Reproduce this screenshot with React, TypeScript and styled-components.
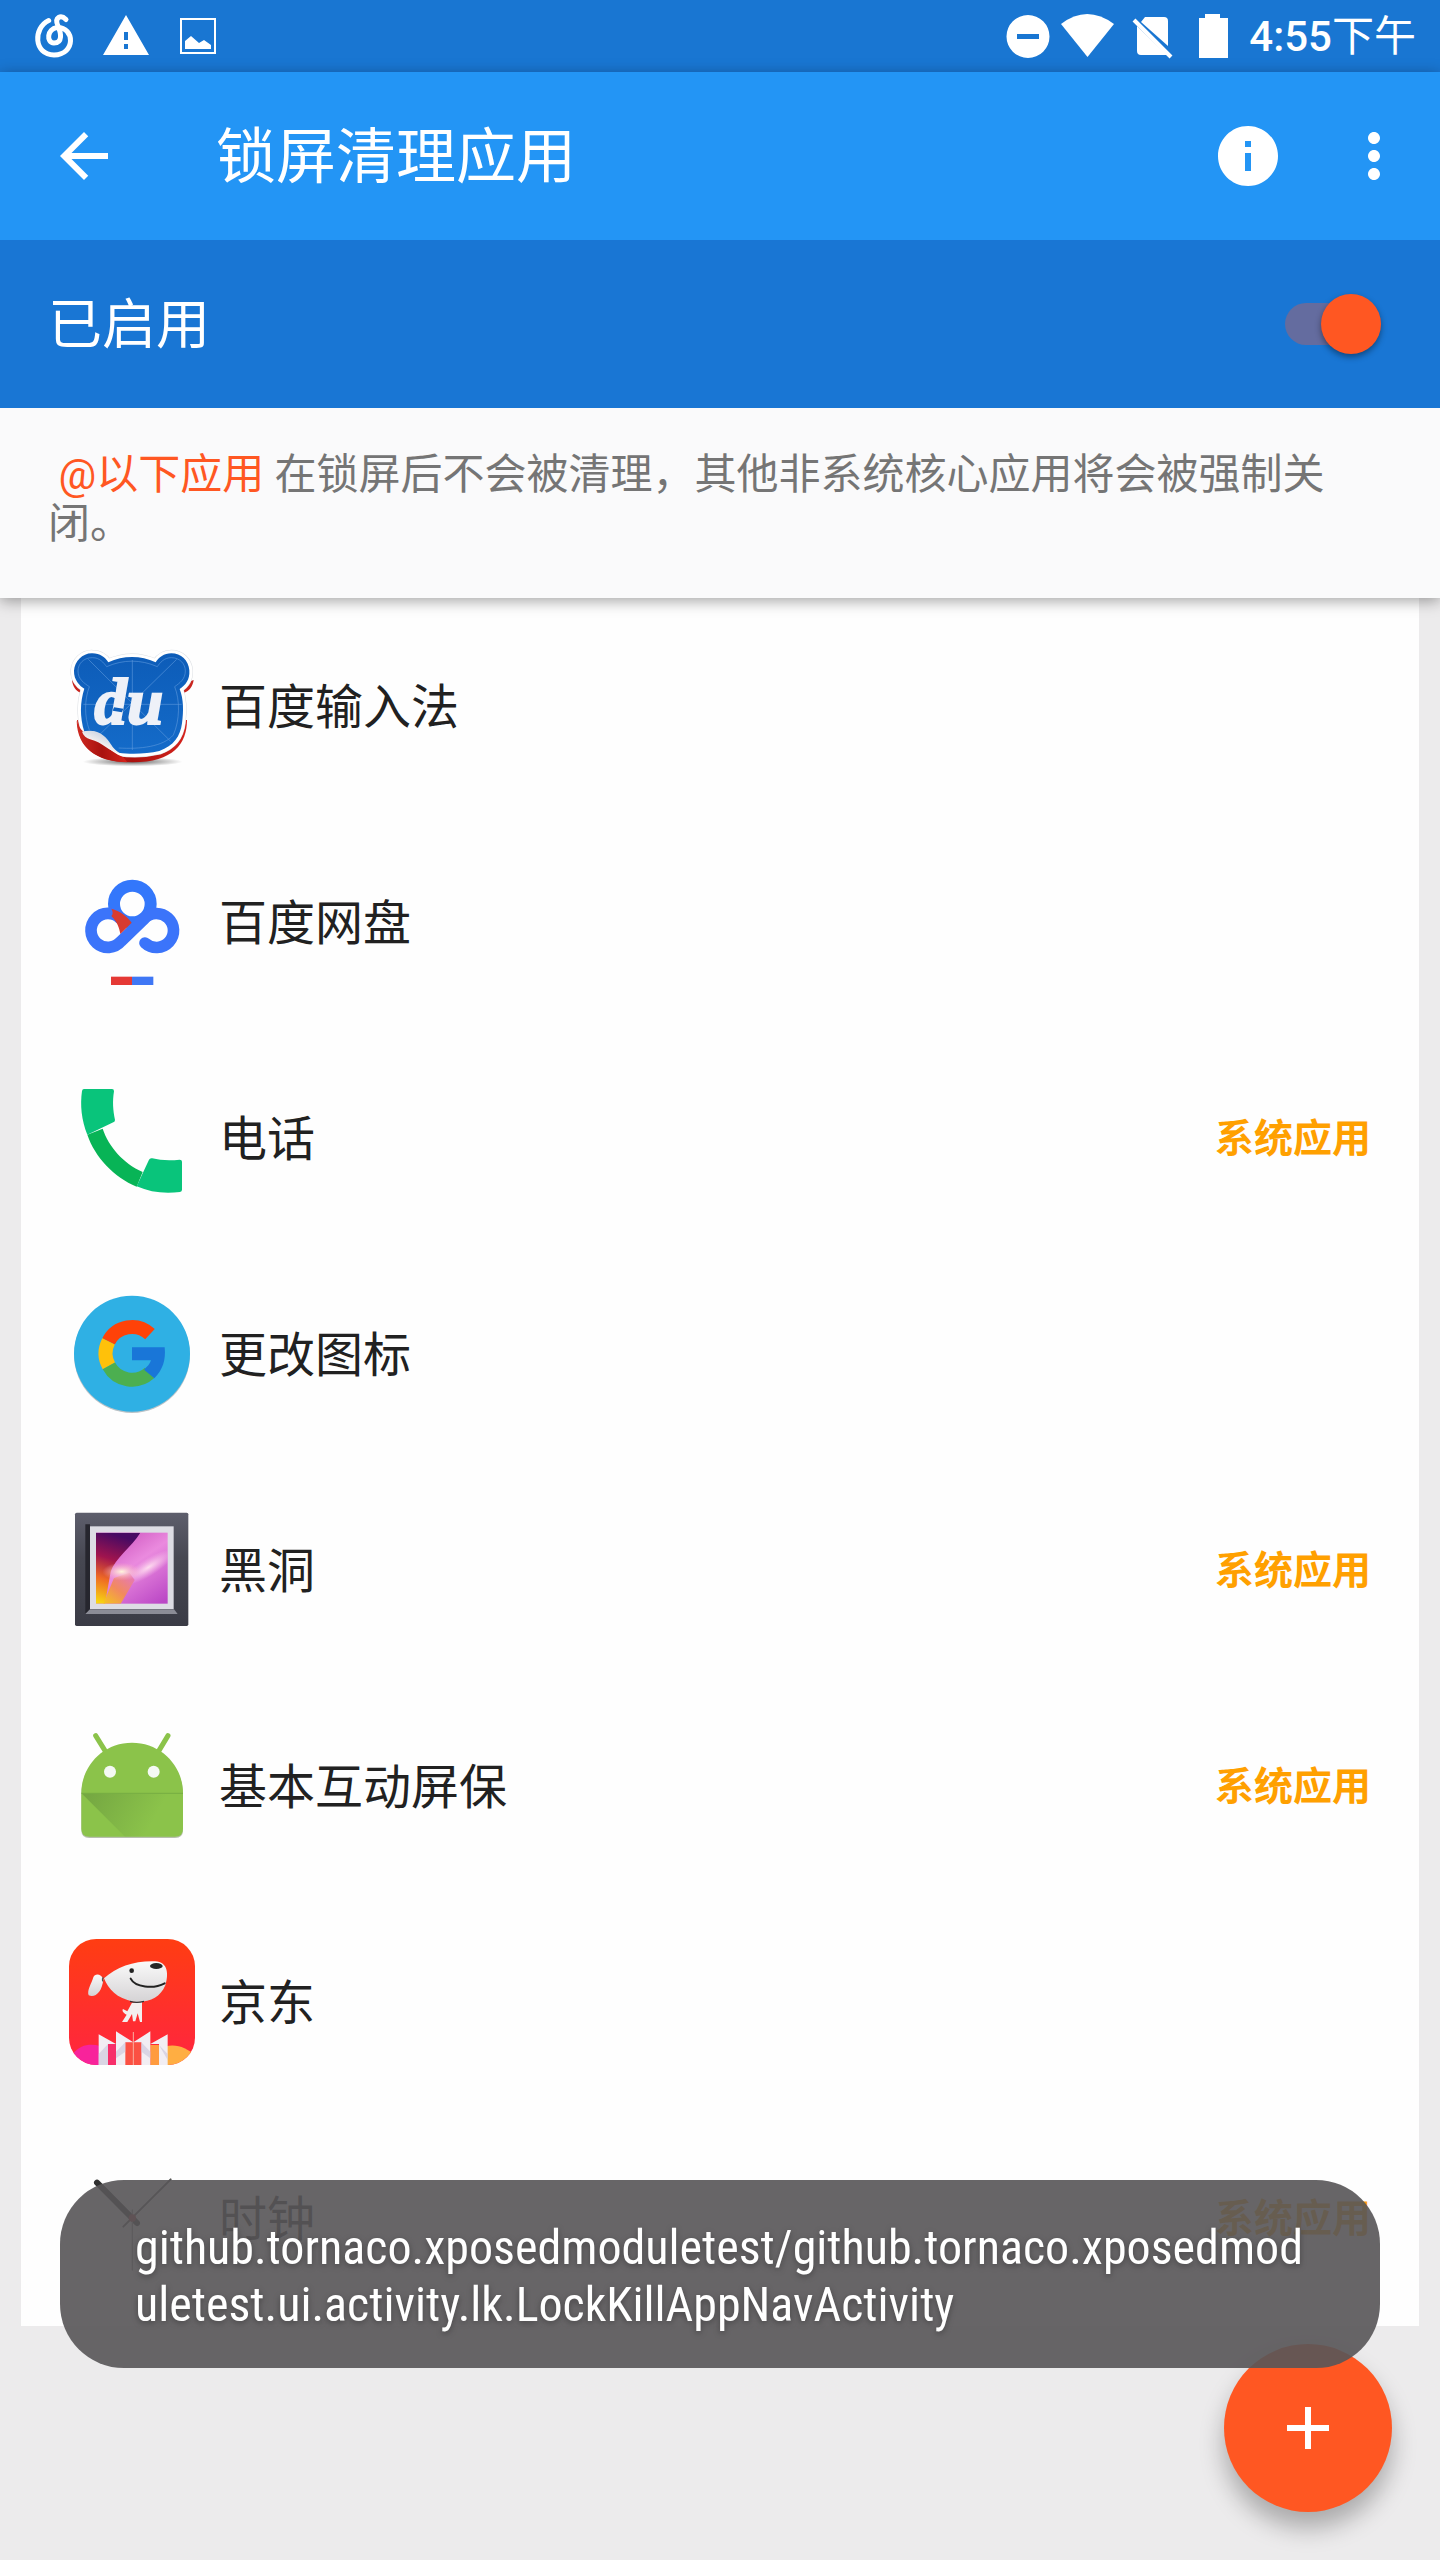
import React, { useState } from "react";
import styled, { createGlobalStyle } from "styled-components";

const GlobalStyle = createGlobalStyle`
  * { box-sizing: border-box; }
  body {
    margin: 0;
    background: #ecebec;
    color: #212121;
    font-family: Roboto, "Noto Sans CJK SC", sans-serif;
  }
  button { border: 0; padding: 0; background: none; color: inherit; cursor: pointer; font: inherit; }
  svg { display: block; }
`;

const Screen = styled.div`
  display: flex;
  flex-direction: column;
  min-height: 100vh;
`;

const StatusBar = styled.div`
  display: flex;
  align-items: center;
  justify-content: space-between;
  height: 72px;
  padding: 0 24px 0 18px;
  background: #1976d2;
  color: #fff;
`;

const StatusGroup = styled.div`
  display: flex;
  align-items: center;
`;

const Clock = styled.time`
  margin-left: 4px;
  padding-top: 2px;
  font-size: 42px;
  line-height: 48px;
  font-weight: 500;
`;

const Period = styled.span`
  font-weight: 400;
`;

const Header = styled.header`
  position: relative;
  z-index: 1;
  box-shadow: 0 3px 14px rgba(0, 0, 0, 0.36);
`;

const AppBar = styled.div`
  display: flex;
  align-items: center;
  height: 168px;
  padding: 0 30px 0 48px;
  background: #2395f5;
  color: #fff;
`;

const IconButton = styled.button`
  width: 72px;
  height: 72px;
`;

const Title = styled.h1`
  flex: 1;
  margin: 0 0 0 96px;
  padding-top: 4px;
  font-size: 60px;
  line-height: 72px;
  font-weight: 400;
`;

const Actions = styled.div`
  display: flex;
  gap: 54px;
`;

const SwitchBar = styled.label`
  display: flex;
  align-items: center;
  justify-content: space-between;
  height: 168px;
  padding: 0 59px 0 48px;
  background: #1976d4;
  color: #fff;
`;

const SwitchLabel = styled.span`
  padding-top: 4px;
  font-size: 54px;
  line-height: 64px;
`;

const Switch = styled.input`
  appearance: none;
  display: flex;
  align-items: center;
  width: 96px;
  height: 42px;
  margin: 0;
  border-radius: 21px;
  background: #646c9f;
  cursor: pointer;

  &::before {
    content: "";
    width: 60px;
    height: 60px;
    flex: none;
    border-radius: 50%;
    background: #eee;
    box-shadow: 0 3px 6px rgba(0, 0, 0, 0.4);
  }
  &:checked { justify-content: flex-end; }
  &:checked::before { background: #ff5722; }
`;

const Notice = styled.p`
  margin: 0;
  padding: 42px 48px 50px;
  background: #fafafb;
  color: #757575;
  font-size: 42px;
  line-height: 49px;
  white-space: pre-wrap;
`;

const Highlight = styled.span`
  color: #ff5722;
`;

const List = styled.ul`
  margin: 0 21px;
  padding: 0;
  list-style: none;
  background: #fefefe;
`;

const Row = styled.li`
  display: flex;
  align-items: center;
  gap: 24px;
  height: 216px;
  padding: 0 48px;
`;

const AppName = styled.span`
  flex: 1;
  padding-top: 4px;
  font-size: 48px;
  line-height: 56px;
`;

const Tag = styled.span`
  padding-top: 2px;
  color: #ffa000;
  font-size: 39px;
  line-height: 48px;
  font-weight: 700;
`;

const Fab = styled.button`
  position: fixed;
  right: 48px;
  bottom: 48px;
  display: grid;
  place-items: center;
  width: 168px;
  height: 168px;
  border-radius: 50%;
  background: #ff5722;
  color: #fff;
  box-shadow: 0 16px 24px rgba(0, 0, 0, 0.28);
`;

const Toast = styled.div`
  position: fixed;
  z-index: 2;
  left: 60px;
  right: 60px;
  bottom: 192px;
  padding: 39px 75px 35px;
  border-radius: 64px;
  background: rgba(88, 86, 88, 0.91);
  color: #fff;
  font-family: "Roboto Condensed", Roboto, sans-serif;
  font-size: 48px;
  line-height: 57px;
  word-break: break-all;
  text-shadow: 0 2px 6px rgba(0, 0, 0, 0.35);
`;

const LeftGlyph = ({ children }: { children: React.ReactNode }) => (
  <svg width="72" height="72" viewBox="0 0 72 72" fill="#fff" aria-hidden="true">{children}</svg>
);

const RightGlyph = ({ children }: { children: React.ReactNode }) => (
  <svg width="62" height="72" viewBox="0 0 62 72" fill="#fff" aria-hidden="true">{children}</svg>
);

const ActionGlyph = ({ d }: { d: string }) => (
  <svg width="72" height="72" viewBox="0 0 24 24" fill="currentColor" aria-hidden="true">
    <path d={d} />
  </svg>
);

const AppIcon = ({ top, children }: { top: number; children: React.ReactNode }) => (
  <svg width="126" height="126" viewBox={`87 ${top} 378 378`} overflow="visible" aria-hidden="true">
    {children}
  </svg>
);

const bear =
  "M157 100C128 99 104 124 102 152C101 180 120 198 133 206C120 246 119 290 133 335C165 328 183 342 202 364C212 377 221 391 236 398C270 403 320 402 358 393C401 378 421 349 426 310C431 274 431 238 419 207C436 196 450 180 448 151C446 122 423 100 394 100C372 100 356 113 347 127C302 106 250 106 205 127C196 112 180 100 157 100Z";

const InputMethodIcon = () => (
  <AppIcon top={69}>
    <defs>
      <linearGradient id="imeBlue" x1="0" y1="0" x2="0" y2="1">
        <stop offset="0" stopColor="#0d5cb8" />
        <stop offset="1" stopColor="#146bc9" />
      </linearGradient>
      <linearGradient id="imeRed" x1="0" y1="0" x2="1" y2="0">
        <stop offset="0" stopColor="#cf2a22" />
        <stop offset="0.5" stopColor="#a9120f" />
        <stop offset="1" stopColor="#d6231c" />
      </linearGradient>
      <linearGradient id="imeCurl" x1="0.2" y1="0.8" x2="0.6" y2="0.3">
        <stop offset="0" stopColor="#c9a9a8" />
        <stop offset="0.5" stopColor="#f4f0f0" />
        <stop offset="1" stopColor="#d5dbe6" />
      </linearGradient>
      <radialGradient id="imeShadow">
        <stop offset="0" stopColor="#000" stopOpacity="0.6" />
        <stop offset="1" stopColor="#000" stopOpacity="0" />
      </radialGradient>
    </defs>
    <ellipse cx="278" cy="425" rx="150" ry="14" fill="url(#imeShadow)" />
    <path d="M96 180C98 200 108 214 122 218L122 190ZM461 180C458 200 448 214 432 218L432 190Z" fill="#c9251f" />
    <path d="M111 300C114 370 150 427 278 427C400 427 441 370 441 300Z" fill="url(#imeRed)" />
    <path d={bear} fill="#fff" stroke="#dcdfe3" strokeWidth="22" strokeLinejoin="round" />
    <path d={bear} fill="#fff" stroke="#fff" strokeWidth="19" strokeLinejoin="round" />
    <path d={bear} fill="url(#imeBlue)" />
    <g fill="none" stroke="#5e9ade" strokeOpacity="0.6" strokeWidth="3">
      <path d="M277 120V390M130 253H425M145 118L392 364M410 118L150 372" />
      <path d="M157 113C130 113 114 132 114 153C114 178 133 190 148 200C133 240 133 290 148 330M394 113C420 113 436 132 436 153C436 178 418 190 404 200C420 240 420 300 400 345C370 380 300 388 236 384M157 113C180 113 190 128 200 140C250 118 302 118 352 140C360 128 372 113 394 113" />
    </g>
    <path d="M110 302C116 320 124 332 140 342C180 355 200 390 250 412L262 427C170 424 112 385 110 302Z" fill="url(#imeRed)" />
    <path d="M126 335C165 326 190 340 208 366C216 378 224 392 244 402C205 395 190 368 150 358C140 355 130 347 126 335Z" fill="url(#imeCurl)" />
    <text x="163" y="311" fill="#eef1f8" stroke="#eef1f8" strokeWidth="6" fontFamily="Liberation Serif, serif" fontWeight="700" fontStyle="italic" fontSize="196">du</text>
    <path d="M222 262L250 266L246 277L218 272Z" fill="#0f60bd" />
  </AppIcon>
);

const NetdiskIcon = () => (
  <AppIcon top={717}>
    <circle cx="277" cy="852" r="55" fill="none" stroke="#3377fb" strokeWidth="36" />
    <path
      d="M240 895A51 51 0 1 0 243 964L312 897A51 51 0 1 1 315 969"
      fill="none" stroke="#3b74fa" strokeWidth="35" strokeLinecap="round" strokeLinejoin="round"
    />
    <path d="M214 866C240 872 262 890 275 908L241 942C238 925 232 905 214 888Q222 880 214 866Z" fill="#d83b30" />
    <path d="M213 1070H276V1095H213Z" fill="#e53935" />
    <path d="M276 1070H340V1095H276Z" fill="#3f77f5" />
  </AppIcon>
);

const PhoneIcon = () => (
  <AppIcon top={45}>
    <path d="M142 224L188 206C206 260 250 310 308 336L290 380C222 352 164 290 142 224Z" fill="#08b456" />
    <path d="M132 87H216Q222 87 222 94C217 125 219 150 225 180Q225 185 220 187L142 224C124 180 120 135 126 93Q127 87 132 87Z" fill="#09c47b" />
    <path d="M290 379L327 299Q330 293 337 295C360 301 390 302 419 299Q426 299 426 305V389Q426 395 420 396C375 402 330 397 290 379Z" fill="#09c47b" />
  </AppIcon>
);

const IconChangerIcon = () => (
  <AppIcon top={693}>
    <circle cx="276" cy="885" r="174" fill="#8a9aa2" opacity="0.6" />
    <circle cx="276" cy="881" r="174" fill="#2fb0e4" />
    <g fill="none" strokeWidth="42">
      <path d="M205.600 844.100A79 79 0 0 1 329.900 822.200" stroke="#ff4208" />
      <path d="M206.600 917.700A79 79 0 0 1 205.600 844.100" stroke="#ffc10a" />
      <path d="M328.900 938.700A79 79 0 0 1 206.600 917.700" stroke="#4caf50" />
    </g>
    <path d="M276 862H374C378 900 368 930 343 955L312 929C322 920 330 912 333 901H276Z" fill="#1976d8" />
  </AppIcon>
);

const GalleryIcon = () => (
  <AppIcon top={81}>
    <defs>
      <linearGradient id="frame" x1="0" y1="0" x2="0" y2="1">
        <stop offset="0" stopColor="#5d5e6c" />
        <stop offset="0.4" stopColor="#474852" />
        <stop offset="1" stopColor="#3a3b45" />
      </linearGradient>
      <linearGradient id="photo" x1="0.2" y1="0" x2="0.9" y2="1">
        <stop offset="0" stopColor="#c94dbb" />
        <stop offset="0.45" stopColor="#ea8ade" />
        <stop offset="1" stopColor="#bb48c6" />
      </linearGradient>
      <linearGradient id="photoDark" x1="0.3" y1="0" x2="0.1" y2="1">
        <stop offset="0" stopColor="#470a63" />
        <stop offset="0.35" stopColor="#a0144e" />
        <stop offset="0.65" stopColor="#ef6a24" />
        <stop offset="1" stopColor="#f7d812" />
      </linearGradient>
      <linearGradient id="photoWarm" x1="0" y1="1" x2="0.8" y2="0">
        <stop offset="0" stopColor="#f5c51c" />
        <stop offset="0.5" stopColor="#f28a5e" />
        <stop offset="1" stopColor="#e678b8" />
      </linearGradient>
      <radialGradient id="photoLight">
        <stop offset="0" stopColor="#fff6dc" />
        <stop offset="1" stopColor="#ffb0c0" stopOpacity="0" />
      </radialGradient>
      <radialGradient id="photoGlow">
        <stop offset="0" stopColor="#ffe0f0" stopOpacity="0.95" />
        <stop offset="1" stopColor="#ffc8ee" stopOpacity="0" />
      </radialGradient>
      <clipPath id="photoClip"><rect x="168" y="158" width="215" height="213" /></clipPath>
    </defs>
    <rect x="105" y="98" width="340" height="340" rx="5" fill="url(#frame)" />
    <path d="M136 133H150V388L136 402Z" fill="#26262e" />
    <path d="M136 402L150 388H402L413 402Z" fill="#8b8c96" />
    <rect x="150" y="139" width="251" height="248" fill="#dddde4" />
    <rect x="168" y="158" width="215" height="213" fill="url(#photo)" />
    <g clipPath="url(#photoClip)">
      <ellipse cx="325" cy="262" rx="92" ry="26" transform="rotate(-32 325 262)" fill="url(#photoGlow)" />
      <path d="M168 158H301C275 200 225 235 212 275L195 371H168Z" fill="url(#photoDark)" />
      <path d="M190 371L222 294L268 278L284 300L242 371Z" fill="url(#photoWarm)" />
      <ellipse cx="245" cy="275" rx="58" ry="27" fill="url(#photoLight)" />
    </g>
  </AppIcon>
);

const RobotIcon = () => (
  <AppIcon top={729}>
    <defs>
      <linearGradient id="robotShade" gradientUnits="userSpaceOnUse" x1="150" y1="941" x2="330" y2="1040">
        <stop offset="0" stopColor="#557f36" stopOpacity="0.4" />
        <stop offset="1" stopColor="#557f36" stopOpacity="0" />
      </linearGradient>
    </defs>
    <path d="M124 1045V944C124 860 190 791 276 791C362 791 429 860 429 944V1050Q429 1074 405 1074H148Q124 1074 124 1050Z" fill="#7b8a6c" opacity="0.55" />
    <path d="M167 767L200 820M384 767L352 820" stroke="#8bc34a" strokeWidth="15" strokeLinecap="round" />
    <path d="M124 1045V940C124 856 190 788 276 788C362 788 429 856 429 940V1046Q429 1070 405 1070H148Q124 1070 124 1046Z" fill="#8bc34a" />
    <path d="M126 941H429V1070H255Z" fill="url(#robotShade)" />
    <path d="M124 940H429" stroke="#6ca23e" strokeWidth="2" />
    <circle cx="210" cy="875" r="18" fill="#f4f9f4" />
    <circle cx="341" cy="875" r="18" fill="#f4f9f4" />
  </AppIcon>
);

const ShoppingIcon = () => (
  <AppIcon top={117}>
    <defs>
      <linearGradient id="shopRed" x1="0" y1="0" x2="0" y2="1">
        <stop offset="0" stopColor="#ff3d12" />
        <stop offset="1" stopColor="#ff2540" />
      </linearGradient>
      <linearGradient id="dog" x1="0" y1="0" x2="0" y2="1">
        <stop offset="0" stopColor="#fafafa" />
        <stop offset="1" stopColor="#d5d3d5" />
      </linearGradient>
      <clipPath id="shopClip"><rect x="87" y="117" width="378" height="378" rx="82" /></clipPath>
    </defs>
    <g clipPath="url(#shopClip)">
      <path d="M87 117H465V495H87Z" fill="url(#shopRed)" />
      <path d="M100 460C120 435 150 430 180 438V495H100Z" fill="#f8239b" />
      <path d="M375 440C410 430 440 445 465 465V495H375Z" fill="#ffae42" />
      <path d="M204 432H228V495H204Z" fill="#f72f6a" />
      <path d="M254 427H303V495H254Z" fill="#fb5143" />
      <path d="M331 435H357V495H331Z" fill="#ff9b3f" />
      <path d="M176 403L228 432H204V495H176ZM228 394L280 427H256V495H228ZM331 394L280 427H304V495H331ZM383 403L331 432H357V495H383Z" fill="#f2eef3" />
      <path d="M204 432L176 462V495H204ZM256 427L228 455V475L256 455ZM304 427L331 455V475L304 455ZM357 435L383 462V480Z" fill="#c9c4da" opacity="0.6" />
      <path d="M280 396V495" stroke="#f8b0a0" strokeWidth="3" />
    </g>
    <path d="M276 308L306 305V366H300L293 340L286 364H279L276 342L262 366H246L260 344C247 338 246 330 249 327L262 334Z" fill="#f3efef" />
    <path d="M192 235C230 200 285 182 345 184C385 185 386 225 376 256C360 294 325 310 280 305C230 295 205 268 192 235Z" fill="url(#dog)" />
    <path d="M190 238C185 222 165 218 160 232C155 250 140 272 146 286C165 294 186 278 190 238Z" fill="url(#dog)" />
    <path d="M190 232Q186 236 188 244" stroke="#555" strokeWidth="4" fill="none" />
    <path d="M272 236C285 262 340 268 374 250" stroke="#222" strokeWidth="6" fill="none" strokeLinecap="round" />
    <path d="M270 304Q290 310 312 304" stroke="#333" strokeWidth="4" fill="none" />
    <ellipse cx="349" cy="198" rx="19" ry="9" fill="#262626" />
    <circle cx="275" cy="212" r="7" fill="#222" />
  </AppIcon>
);

const ClockIcon = () => (
  <AppIcon top={765}>
    <g strokeLinecap="round" fill="none">
      <path d="M171 848L291 969" stroke="#303030" strokeWidth="18" />
      <path d="M392 838L250 980" stroke="#555" strokeWidth="6" />
      <path d="M277 930V1110" stroke="#8d8d8d" strokeWidth="4" />
    </g>
    <circle cx="277" cy="954" r="11" fill="#a62f36" />
  </AppIcon>
);

const apps = [
  { name: "百度输入法", Icon: InputMethodIcon, system: false },
  { name: "百度网盘", Icon: NetdiskIcon, system: false },
  { name: "电话", Icon: PhoneIcon, system: true },
  { name: "更改图标", Icon: IconChangerIcon, system: false },
  { name: "黑洞", Icon: GalleryIcon, system: true },
  { name: "基本互动屏保", Icon: RobotIcon, system: true },
  { name: "京东", Icon: ShoppingIcon, system: false },
  { name: "时钟", Icon: ClockIcon, system: true },
];

export default function App() {
  const [enabled, setEnabled] = useState(true);

  return (
    <Screen>
      <GlobalStyle />
      <StatusBar>
        <StatusGroup>
          <LeftGlyph>
            <path
              d="M30.700 20.500C15 28 15.500 54.500 36 55C58 54.500 57 27 39 27.500C29 29 28 42.500 36 43C45 43 43 33 40 26C36 17 43 14.500 48 19.500"
              fill="none" stroke="#fff" strokeWidth="5" strokeLinecap="round"
            />
          </LeftGlyph>
          <LeftGlyph>
            <path d="M36 15L59 55H13ZM34 32V40H38V32ZM34 44V49H38V44Z" fillRule="evenodd" />
          </LeftGlyph>
          <LeftGlyph>
            <rect x="19" y="19" width="34" height="34" fill="none" stroke="#fff" strokeWidth="2" />
            <path d="M23 41L29 36L37 43L42 40L49 45V49H23Z" />
          </LeftGlyph>
        </StatusGroup>
        <StatusGroup>
          <RightGlyph>
            <path d="M31 15A21.500 21.500 0 1 0 31 58A21.500 21.500 0 1 0 31 15ZM20 34H42V39H20Z" fillRule="evenodd" />
          </RightGlyph>
          <RightGlyph>
            <path d="M2 24Q28 4 55 24L28.500 57Z" />
          </RightGlyph>
          <RightGlyph>
            <path d="M24 17H43Q47 17 47 21V46L20 22ZM16 26L46 55H20Q16 55 16 51Z" />
            <path d="M13 20L50 57" stroke="#fff" strokeWidth="4" />
          </RightGlyph>
          <RightGlyph>
            <path d="M22 14H37V18H45V58H16V18H22Z" />
          </RightGlyph>
          <Clock>4:55<Period>下午</Period></Clock>
        </StatusGroup>
      </StatusBar>

      <Header>
        <AppBar>
          <IconButton aria-label="返回">
            <ActionGlyph d="M20 11H7.830l5.590-5.590L12 4l-8 8 8 8 1.410-1.410L7.830 13H20v-2z" />
          </IconButton>
          <Title>锁屏清理应用</Title>
          <Actions>
            <IconButton aria-label="信息">
              <ActionGlyph d="M12 2C6.480 2 2 6.480 2 12s4.480 10 10 10 10-4.480 10-10S17.520 2 12 2zm1 15h-2v-6h2v6zm0-8h-2V7h2v2z" />
            </IconButton>
            <IconButton aria-label="更多选项">
              <ActionGlyph d="M12 8c1.100 0 2-.9 2-2s-.9-2-2-2-2 .9-2 2 .9 2 2 2zm0 2c-1.100 0-2 .9-2 2s.9 2 2 2 2-.9 2-2-.9-2-2-2zm0 6c-1.100 0-2 .9-2 2s.9 2 2 2 2-.9 2-2-.9-2-2-2z" />
            </IconButton>
          </Actions>
        </AppBar>
        <SwitchBar>
          <SwitchLabel>已启用</SwitchLabel>
          <Switch
            type="checkbox"
            role="switch"
            checked={enabled}
            onChange={(event) => setEnabled(event.target.checked)}
          />
        </SwitchBar>
        <Notice>
          {" "}<Highlight>@以下应用</Highlight>{" 在锁屏后不会被清理，其他非系统核心应用将会被强制关闭。"}
        </Notice>
      </Header>

      <List>
        {apps.map(({ name, Icon, system }) => (
          <Row key={name}>
            <Icon />
            <AppName>{name}</AppName>
            {system && <Tag>系统应用</Tag>}
          </Row>
        ))}
      </List>

      <Fab aria-label="添加">
        <ActionGlyph d="M19 13h-6v6h-2v-6H5v-2h6V5h2v6h6v2z" />
      </Fab>
      <Toast role="status">
        github.tornaco.xposedmoduletest/github.tornaco.xposedmoduletest.ui.activity.lk.LockKillAppNavActivity
      </Toast>
    </Screen>
  );
}
